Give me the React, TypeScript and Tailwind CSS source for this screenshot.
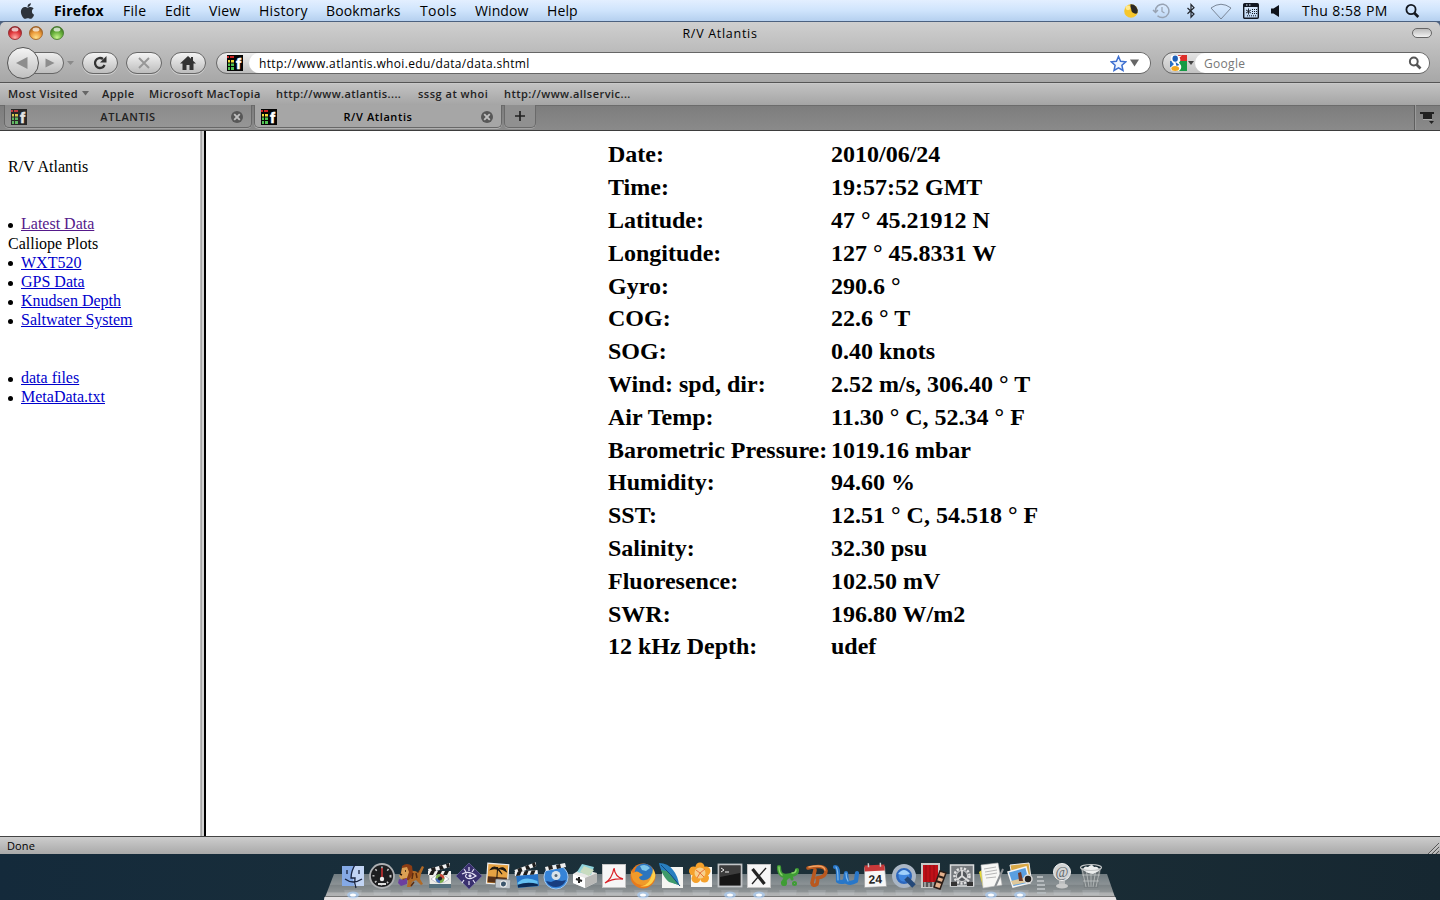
import React from "react";
import { FaApple } from "react-icons/fa";

type P = { children?: React.ReactNode };

const menus: [string, string][] = [
  ["Firefox", "w-[69px] font-bold tracking-[0.15px]"],
  ["File", "w-[42px] tracking-[0.3px]"],
  ["Edit", "w-[44px] tracking-[0.1px]"],
  ["View", "w-[50px] tracking-[0.2px]"],
  ["History", "w-[67px] tracking-[0.3px]"],
  ["Bookmarks", "w-[94px] tracking-[0.1px]"],
  ["Tools", "w-[55px] tracking-[0.4px]"],
  ["Window", "w-[72px] tracking-[0.1px]"],
  ["Help", "w-[60px] tracking-[0.1px]"],
];

const bookmarks: [string, string][] = [
  ["Apple", "w-[47px]"],
  ["Microsoft MacTopia", "w-[127px]"],
  ["http://www.atlantis....", "w-[142px]"],
  ["sssg at whoi", "w-[86px] tracking-[0.5px]"],
  ["http://www.allservic...", "w-[150px] tracking-[0.45px]"],
];

const readings: [string, string][] = [
  ["Date:", "2010/06/24"],
  ["Time:", "19:57:52 GMT"],
  ["Latitude:", "47 ° 45.21912 N"],
  ["Longitude:", "127 ° 45.8331 W"],
  ["Gyro:", "290.6 °"],
  ["COG:", "22.6 ° T"],
  ["SOG:", "0.40 knots"],
  ["Wind: spd, dir:", "2.52 m/s, 306.40 ° T"],
  ["Air Temp:", "11.30 ° C, 52.34 ° F"],
  ["Barometric Pressure:", "1019.16 mbar"],
  ["Humidity:", "94.60 %"],
  ["SST:", "12.51 ° C, 54.518 ° F"],
  ["Salinity:", "32.30 psu"],
  ["Fluoresence:", "102.50 mV"],
  ["SWR:", "196.80 W/m2"],
  ["12 kHz Depth:", "udef"],
];

function Favicon() {
  return (
    <svg width="16" height="16" viewBox="0 0 16 16" className="shrink-0 overflow-visible">
      <rect width="16" height="16" fill="#050505" />
      <path d="M0 1h2v2H0zM3 1h4v2H3z" fill="#c22" />
      <path d="M1 5h2v2.500H1zM4 5h3v2.500H4z" fill="#f0dc3c" />
      <path d="M1 8.500h2v2.500H1zM4 8.500h3v2.500H4zM1 12h2v3H1zM4 12h3v3H4z" fill="#4fc250" />
      <text x="9" y="14" fontFamily="Liberation Sans, sans-serif" fontWeight="700" fontSize="15" fill="#fff" stroke="#fff" strokeWidth=".6">f</text>
    </svg>
  );
}

function Light({ id, a, b, c }: { id: string; a: string; b: string; c: string }) {
  return (
    <svg width="14" height="14" viewBox="0 0 14 14">
      <defs>
        <radialGradient id={id} cx="50%" cy="85%" r="80%">
          <stop offset="0" stopColor={a} />
          <stop offset=".55" stopColor={b} />
          <stop offset="1" stopColor={c} />
        </radialGradient>
      </defs>
      <circle cx="7" cy="7" r="6.500" fill={`url(#${id})`} stroke={c} strokeWidth=".8" />
      <ellipse cx="7" cy="3.600" rx="3.400" ry="2" fill="#fff" opacity=".7" />
    </svg>
  );
}

function Pill({ children }: P) {
  return (
    <div className="flex h-[22px] w-9 items-center justify-center rounded-full border border-[#666] bg-linear-to-b from-[#f4f4f4] to-[#bdbdbd] shadow-[0_1px_0_#d0d0d0]">
      {children}
    </div>
  );
}

function CloseDot() {
  return (
    <svg width="12" height="12" viewBox="0 0 12 12">
      <circle cx="6" cy="6" r="6" fill="#575757" />
      <path d="M3.200 3.200l5.600 5.600M8.800 3.200l-5.600 5.600" stroke="#c0c0c0" strokeWidth="1.900" />
    </svg>
  );
}

function MenuBar() {
  return (
    <div className="flex h-[22px] items-center border-b border-[#4c617f] bg-linear-to-b from-[#e3efff] via-[#cfe4fc] to-[#b5d0ef] text-[14px] leading-[21px] text-black">
      <div className="flex w-[54px] justify-center">
        <FaApple className="h-[18px] w-[17px] text-[#2d333b]" />
      </div>
      {menus.map(([label, cls]) => (
        <span key={label} className={cls}>{label}</span>
      ))}
      <div className="ml-auto flex w-[318px] items-center">
        <svg width="18" height="18" viewBox="0 0 18 18">
          <circle cx="9" cy="9" r="6.800" fill="#f6c62b" />
          <path d="M8.500 2.200a6.800 6.800 0 0 1 7 8.500c-1 1.500-2.500 1-4 .300C8.500 9.500 10 7.500 8.500 5.500z" fill="#2b2926" />
          <circle cx="6" cy="5.800" r="2.400" fill="#ffe98f" />
        </svg>
        <svg className="ml-[12px]" width="18" height="18" viewBox="0 0 18 18" fill="none" stroke="#98a3b3" strokeWidth="1.500">
          <path d="M3.500 9.500a6.700 6.700 0 1 1 2 4.200M1 8l2.500 2.500L6 8" />
          <path d="M10 5v4.500l2.500 1.500" strokeWidth="1.200" />
        </svg>
        <svg className="ml-[14px]" width="14" height="16" viewBox="0 0 14 16" fill="none" stroke="#20242b" strokeWidth="1.200">
          <path d="M3.500 5l6.500 6-3 3.200V1.500l3 3.200-6.500 6.100" />
        </svg>
        <svg className="ml-[12px]" width="22" height="18" viewBox="0 0 22 18" fill="none" stroke="#7b8798" strokeWidth="1">
          <path d="M1 6Q11 -1.500 21 6L11 17z" />
        </svg>
        <svg className="ml-[11px]" width="16" height="16" viewBox="0 0 16 16">
          <rect x=".7" y=".7" width="14.600" height="14.600" rx="1" fill="none" stroke="#111722" strokeWidth="1.400" />
          <path d="M1 1h14v3H1z" fill="#111722" />
          <path d="M3 2h1.500M6 2h1.500" stroke="#dce9fa" />
          <path d="M5.500 5.500v6M3 7l5 3M8 7l-5 3" stroke="#111722" strokeWidth=".9" />
          <path d="M9 6.500h5M9 8.500h5M9 10.500h5M4 12.800h10" stroke="#111722" strokeDasharray="1 1" />
        </svg>
        <svg className="ml-[12px]" width="10" height="14" viewBox="0 0 10 14">
          <path d="M0 4.500h2.500L8 1v12L2.500 9.500H0z" fill="#0e121a" />
        </svg>
        <span className="ml-[21px] w-[101px] tracking-[0.45px]">Thu 8:58 PM</span>
        <svg width="18" height="18" viewBox="0 0 18 18" fill="none" stroke="#14181f">
          <circle cx="8" cy="7.500" r="4.600" strokeWidth="1.800" />
          <path d="M11.300 11l4 4" strokeWidth="2.600" />
        </svg>
      </div>
    </div>
  );
}

function TitleAndToolbar() {
  return (
    <div className="h-[61px] rounded-t-[5px] border-b border-[#555] bg-linear-to-b from-[#cfcfcf] to-[#a7a7a7]">
      <div className="flex h-[22px] items-center px-2">
        <div className="flex w-[100px] gap-[7px]">
          <Light id="lr" a="#ffb0a8" b="#e23a3e" c="#8e1f25" />
          <Light id="ly" a="#ffe08a" b="#eb9a3a" c="#9b5a1c" />
          <Light id="lg" a="#c9f58f" b="#68b03c" c="#3c7423" />
        </div>
        <div className="flex-1 pt-px text-center text-[12.5px] leading-[22px] tracking-[0.7px] text-black">R/V Atlantis</div>
        <div className="flex w-[100px] justify-end">
          <div className="h-[10px] w-[20px] rounded-full border border-[#666] bg-linear-to-b from-[#bbb] to-[#f2f2f2]" />
        </div>
      </div>
      <div className="flex h-[38px] items-center pl-[7px]">
        <div className="z-10 flex h-8 w-8 items-center justify-center rounded-full border border-[#555] bg-linear-to-b from-[#f4f4f4] to-[#c0c0c0]">
          <svg className="-mt-px mr-[2px]" width="12" height="12" viewBox="0 0 12 12"><path d="M11.500 0v12L0 6z" fill="#8d8d8d" /></svg>
        </div>
        <div className="-ml-[12px] flex h-[22px] w-[37px] items-center rounded-r-full border border-[#666] bg-linear-to-b from-[#ededed] to-[#bdbdbd] pl-[17px]">
          <svg width="10" height="10" viewBox="0 0 10 10"><path d="M.500 .500v9L9.500 5z" fill="#8d8d8d" /></svg>
        </div>
        <svg className="ml-[3px]" width="7" height="5" viewBox="0 0 7 5"><path d="M0 0h7L3.500 4z" fill="#8a8a8a" /></svg>
        <div className="ml-[8px] flex gap-2">
          <Pill>
            <svg width="16" height="16" viewBox="0 0 16 16">
              <path d="M12.600 10A5 5 0 1 1 11 4" fill="none" stroke="#333" strokeWidth="2.300" />
              <path d="M14.500 1v6.500H8z" fill="#333" />
            </svg>
          </Pill>
          <Pill>
            <svg width="14" height="14" viewBox="0 0 14 14"><path d="M2 2l10 10M12 2L2 12" stroke="#979797" strokeWidth="1.900" /></svg>
          </Pill>
          <Pill>
            <svg width="16" height="14" viewBox="0 0 16 14"><path d="M8 0l3 2.800V1h2v3.700L16 7.500H13.500V14H9.500V9h-3v5h-4V7.500H0z" fill="#333" /></svg>
          </Pill>
        </div>
        <div className="ml-[10px] flex h-[22px] w-[935px] items-center rounded-full border border-[#666] bg-linear-to-b from-[#f0f0f0] to-[#bcbcbc] pl-[10px]">
          <Favicon />
          <div className="ml-[6px] flex h-5 flex-1 items-center rounded-full bg-white pl-[10px] text-[12px] leading-5 text-black">
            <span className="pt-px tracking-[0.35px]">http://www.atlantis.whoi.edu/data/data.shtml</span>
            <svg className="ml-auto" width="17" height="17" viewBox="0 0 17 17">
              <path d="M8.500 1.500l2.100 4.800 5.200.5-3.900 3.500 1.100 5.200-4.500-2.700L4 15.500l1.100-5.200L1.200 6.800l5.200-.5z" fill="#eef5ff" stroke="#3d6fd0" strokeWidth="1.500" />
            </svg>
            <svg className="mr-[11px] ml-[3px]" width="9" height="8" viewBox="0 0 9 8"><path d="M0 .500h9L4.500 7.500z" fill="#666" /></svg>
          </div>
        </div>
        <div className="ml-[11px] flex h-[22px] w-[268px] items-center rounded-full border border-[#666] bg-linear-to-b from-[#e4e4e4] to-[#c2c2c2] pl-[7px]">
          <svg width="17" height="17" viewBox="0 0 17 17">
            <path d="M8 0h9v6H8z" fill="#dd2e2a" />
            <path d="M8 6h9v10H8z" fill="#179a45" />
            <path d="M0 6h5v6H0z" fill="#2a6fc4" />
            <path d="M1 1q4-2 8 0l3-.5-2.500 2q2 3-.5 5l2 3q1 4-2 5.500H2q-3-3 0-5l2-2Q0 6 1 1z" fill="#fff" />
            <ellipse cx="5.200" cy="3.600" rx="2.700" ry="3.200" fill="#1d5fb8" />
            <path d="M5.500 7l4 3-3 1z" fill="#1d5fb8" />
            <ellipse cx="5.200" cy="13.500" rx="3.900" ry="2.500" fill="#f2a821" />
          </svg>
          <svg className="ml-[1px]" width="6" height="4" viewBox="0 0 6 4"><path d="M0 0h6L3 4z" fill="#444" /></svg>
          <div className="ml-px flex h-5 flex-1 items-center rounded-full bg-white pl-[9px] text-[12px] leading-5 text-[#777]">
            <span className="pt-px tracking-[0.3px]">Google</span>
            <svg className="mr-[7px] ml-auto" width="14" height="14" viewBox="0 0 14 14" fill="none" stroke="#555">
              <circle cx="5.800" cy="5.500" r="3.900" strokeWidth="2" />
              <path d="M8.500 8.500l4 4" strokeWidth="2.600" />
            </svg>
          </div>
        </div>
      </div>
    </div>
  );
}

function BookmarkBar() {
  return (
    <div className="flex h-[22px] items-center border-t border-[#c9c9c9] bg-linear-to-b from-[#c2c2c2] to-[#a5a5a5] pb-[2px] pl-2 text-[11px] leading-[19px] font-semibold tracking-[0.4px] whitespace-nowrap text-[#222]">
      <span className="w-[74px]">Most Visited</span>
      <svg className="mr-[13px]" width="7" height="5" viewBox="0 0 7 5"><path d="M0 0h7L3.500 4.500z" fill="#666" /></svg>
      {bookmarks.map(([label, cls]) => (
        <span key={label} className={cls}>{label}</span>
      ))}
    </div>
  );
}

function TabBar() {
  return (
    <div className="flex h-[26px] items-start border-b border-[#3d3d3d] bg-linear-to-b from-[#7d7d7d] to-[#8a8a8a] pl-[4px] text-[11px] leading-[22px] font-semibold text-[#222] shadow-[inset_0_1px_0_#6c6c6c]">
      <div className="flex h-[23px] w-[248px] items-center rounded-b-[5px] border border-t-0 border-[#686868] bg-linear-to-b from-[#8b8b8b] to-[#969696] pt-px pr-2 pl-[6px] shadow-[0_1px_0_#a2a2a2]">
        <span className="flex opacity-75"><Favicon /></span>
        <span className="flex-1 pr-[2px] text-center tracking-[0.55px]">ATLANTIS</span>
        <CloseDot />
      </div>
      <div className="ml-[2px] flex h-[23px] w-[248px] items-center rounded-b-[5px] border border-t-0 border-[#686868] bg-[#a6a6a6] pt-px pr-2 pl-[6px] text-black shadow-[0_1px_0_#b0b0b0]">
        <Favicon />
        <span className="flex-1 pr-[2px] text-center tracking-[0.6px]">R/V Atlantis</span>
        <CloseDot />
      </div>
      <div className="ml-[2px] flex h-[23px] w-[32px] items-center justify-center rounded-b-[5px] border border-t-0 border-[#6a6a6a] bg-[#909090] shadow-[0_1px_0_#a2a2a2]">
        <svg width="12" height="12" viewBox="0 0 12 12"><path d="M6 1v10M1 6h10" stroke="#222" strokeWidth="1.700" /></svg>
      </div>
      <div className="ml-auto flex h-[25px] w-[26px] items-center border-l border-[#5f5f5f] pl-[5px] shadow-[inset_1px_0_0_#9b9b9b]">
        <svg width="15" height="14" viewBox="0 0 15 14">
          <path d="M0 1h14v2h-2v5H3V3H0z" fill="#222" />
          <path d="M9 10h5l-2.500 3z" fill="#222" />
          <path d="M3 8.500h9" stroke="#aaa" />
        </svg>
      </div>
    </div>
  );
}

function Bullet({ children, visited }: P & { visited?: boolean }) {
  return (
    <li className="flex items-center">
      <span className="mt-[3px] mr-[8px] h-[5px] w-[5px] rounded-full bg-black" />
      <a className={visited ? "text-[#551a8b] underline" : "text-[#0000cc] underline"}>{children}</a>
    </li>
  );
}

function Sidebar() {
  return (
    <div className="w-[200px] pt-[26px] pl-2 font-['Liberation_Serif',serif] text-[16px] leading-[19.2px] text-black">
      <p>R/V Atlantis</p>
      <ul className="mt-[38.2px]">
        <Bullet visited>Latest Data</Bullet>
        <li>Calliope Plots</li>
        <Bullet>WXT520</Bullet>
        <Bullet>GPS Data</Bullet>
        <Bullet>Knudsen Depth</Bullet>
        <Bullet>Saltwater System</Bullet>
      </ul>
      <ul className="mt-[38.4px]">
        <Bullet>data files</Bullet>
        <Bullet>MetaData.txt</Bullet>
      </ul>
    </div>
  );
}

function Paper() {
  return <rect x="2.500" y="2.500" width="23" height="23" fill="#f6f6f6" stroke="#c4c4c4" />;
}

function Clapper({ body }: { body: string }) {
  return (
    <g>
      <path d="M3 10h22v15H4z" fill={body} />
      <path d="M2 9h23v4H2zM2 7L24 1v4L3 11z" fill="#f2f2f2" />
      <path d="M5 9h4l-2 4H3zM12 9h4l-2 4h-4zM19 9h4l-2 4h-4zM5 6l4-1 1 4-4 1zM13 4l3-1 2 4-4 1zM20 2l3-1 1 4-3 1z" fill="#1c1c1c" />
    </g>
  );
}

const dockIcons: { name: string; on?: boolean; art: React.ReactNode }[] = [
  { name: "finder", on: true, art: <g>
    <path d="M3 4h22v20H3z" fill="#84a9e6" /><path d="M16 4h9v20H15l-1-8h-2q1-8 4-12z" fill="#c1d4f4" />
    <path d="M17 1q-5 8-5 15h4q-1 5 1 10M8 8v4M20 8v4M6 17q8 6 17 0" fill="none" stroke="#18233f" strokeWidth="1.300" /></g> },
  { name: "dashboard", art: <g>
    <circle cx="14" cy="14" r="12" fill="#1d1e20" stroke="#aeb0b3" strokeWidth="1.800" />
    <circle cx="14" cy="14" r="8.500" fill="none" stroke="#c7c7c7" strokeWidth="2" strokeDasharray="1.500 5" />
    <path d="M14 17V6" stroke="#e33" strokeWidth="1.300" /><circle cx="14" cy="17" r="2.200" fill="#eee" /><path d="M10 22h8" stroke="#ddd" strokeWidth="2" /></g> },
  { name: "lion", art: <g>
    <path d="M12 9q7-1 9 2l4-7 2 1-3 7-1 5 3 5-2 1-5-5-4 2-1 5h-4l1-7z" fill="#b06a26" />
    <path d="M5 4q5-4 10 0l1 8-4 6-6 1-2-6z" fill="#8c3d14" /><path d="M5 6l5-1 2 5-2 6-6 1-2-3 2-3z" fill="#dca054" />
    <path d="M2 17l4 1 4-2v6l-6 2-3-3z" fill="#6b3fa0" /><path d="M16 11l-1 6M19 11l1 5M22 10l-1-1M17 20l-3 4" stroke="#5c2c10" strokeWidth="1.500" /><path d="M3 12l2 1M8 9h1" stroke="#2b1406" strokeWidth="1.500" /></g> },
  { name: "media", art: <g><Clapper body="#ecece8" />
    <path d="M5 17q9-9 18 0-9 8-18 0z" fill="#fff" stroke="#99a" strokeWidth=".6" />
    <circle cx="14" cy="16.500" r="4.500" fill="#7bb04f" /><path d="M14 12a4.500 4.500 0 0 1 4.500 4.500H14z" fill="#d2493d" /><path d="M9.500 16.500A4.500 4.500 0 0 0 14 21v-4.500z" fill="#4269bd" /><circle cx="14" cy="16.500" r="2.100" fill="#222" />
    <path d="M3 22h22v4H3z" fill="#54707d" /></g> },
  { name: "eye", art: <g>
    <path d="M14 1l13 13-13 13L1 14z" fill="#39306e" stroke="#6c65a0" strokeWidth=".7" />
    <path d="M7 12q7-4 14 2-6 4-9 2-3-2 0-4M14 5v4M9 7l2 3M19 7l-2 3M14 19v4M9 18l-2 3M18 18l2 3" fill="none" stroke="#e4e1f4" strokeWidth="1.200" /><circle cx="15" cy="13.800" r="1.600" fill="#e4e1f4" /></g> },
  { name: "iphoto", art: <g transform="rotate(4 14 14)">
    <path d="M3 2h21v20H3z" fill="#e7a343" stroke="#eee" strokeWidth="1.200" /><path d="M4 15h19v6H4z" fill="#553018" />
    <path d="M13 5v16M14 7q-5-4-8 1 5-2 8 0zM14 7q6-4 8 2-5-3-8-2zM14 7l4 5-3-3z" fill="#191510" stroke="#191510" />
    <rect x="12" y="17" width="15" height="9" rx="1" fill="#c0c6cc" stroke="#70767b" strokeWidth=".6" /><circle cx="20" cy="21.500" r="3" fill="#3c556c" stroke="#eee" /></g> },
  { name: "imovie", art: <g><g transform="rotate(-5 14 14)"><Clapper body="#2674c9" /><path d="M4 20q8-7 20 0v5H4z" fill="#64c1f2" /><path d="M4 22q10-3 20 1v2H4z" fill="#0c2b57" /></g></g> },
  { name: "idvd", art: <g>
    <circle cx="14" cy="15" r="12" fill="#3684d8" stroke="#a3c8ee" /><path d="M4 19l5 1 5-2 6 1 4-1q-3 7-10 7T4 19z" fill="#173d80" />
    <circle cx="14" cy="13.500" r="4.500" fill="#d9e2e9" /><circle cx="14" cy="13.500" r="1.500" fill="#567" />
    <path d="M3 5l20-4 1 4-20 4z" fill="#eee" /><path d="M6 4l4-1 1 4-4 1zM14 3l4-1 1 4-4 1z" fill="#222" /></g> },
  { name: "cube", art: <g>
    <path d="M2 12l8-5 16 4v9l-12 6-12-5z" fill="#e9e9e7" /><path d="M2 12l12 4v10L2 21z" fill="#fff" /><path d="M14 16l12-5v9l-12 6z" fill="#b9b9b7" />
    <path d="M6 10l5-8 12 3-3 8z" fill="#8ed3dc" /><path d="M9 10l4-6 10 4-5 6z" fill="#c9dcc0" /><path d="M8 15v6M5 17l6 2" stroke="#222" strokeWidth="2" /></g> },
  { name: "acrobat", art: <g><Paper />
    <path d="M5 21q7-4 9-15 1 9 9 11-10-1-18 4z" fill="none" stroke="#da2027" strokeWidth="1.300" /></g> },
  { name: "firefox", on: true, art: <g>
    <circle cx="14" cy="14" r="12.500" fill="#e77a1d" /><circle cx="15" cy="11" r="9.500" fill="#2d75bd" /><path d="M11 4q6-3 10 2l-4 3-4-1z" fill="#7ec6ea" />
    <path d="M2 6q0 4 2 5 4-3 7 0l3 2-4 2q1 4 6 3 5 0 7-7 1 8-5 11-9 3-14-4-3-6-2-12z" fill="#f09a2a" /><path d="M24 7q5 8-1 14-5 5-12 3 11 0 13-17z" fill="#ffd04a" /></g> },
  { name: "feather", art: <g><rect x="4" y="5" width="21" height="21" fill="#f5f5f2" />
    <path d="M1 1q9 0 14 7 5 6 6 15-9-2-14-9Q2 8 1 1z" fill="#287fc0" /><path d="M3 8q3 8 8 12l10 3L9 9z" fill="#3e9a6a" /><path d="M3 3q10 9 19 21" fill="none" stroke="#124a7d" /></g> },
  { name: "flower", art: <g><rect x="4" y="5" width="21" height="20" fill="#f7f7f4" />
    <g fill="#f5a12b"><circle cx="13" cy="5" r="4.500" /><circle cx="19" cy="9" r="4.500" /><circle cx="17.500" cy="16" r="4.500" /><circle cx="9" cy="16.500" r="4.500" /><circle cx="6.500" cy="9" r="4.500" /></g>
    <circle cx="13" cy="11" r="5.500" fill="#f7d08c" /><path d="M13 11l5-4M13 11l-3 5M13 11l-4-3M13 11l4 4" stroke="#e8703a" strokeWidth="1" /></g> },
  { name: "terminal", on: true, art: <g><rect x="2.500" y="2.500" width="23" height="22" fill="#161616" stroke="#c2c5c7" strokeWidth="1.800" /><path d="M4 4h20v7L4 15z" fill="#3c3c3c" /><path d="M5 6l3 2-3 2M9 10h4" fill="none" stroke="#eee" /></g> },
  { name: "x11", on: true, art: <g><Paper /><path d="M7.500 7l12 15" stroke="#222" strokeWidth="3.200" /><path d="M21 6L7 22" stroke="#222" strokeWidth="1.300" /></g> },
  { name: "excel", art: <g fill="none" stroke="#3f9d35" strokeWidth="4.200" strokeLinecap="round"><path d="M5 5q0 6 3 8 3 1.500 9 0 6-1 6-5M16 14q-5 1-6 6" /><path d="M17 14l1 3" strokeWidth="3" /><circle cx="10" cy="21" r="1" /><circle cx="20.500" cy="21.500" r="1" strokeWidth="3" /><path d="M5 5q0 6 3 8M22 8q0 3-4 3" stroke="#8cd56e" strokeWidth="1.400" /></g> },
  { name: "powerpoint", art: <g fill="none" stroke="#b9581e" strokeWidth="3.600" strokeLinecap="round" strokeLinejoin="round"><path d="M5 6q17-4 18 3 0 6-9 7M12 8l-3 13q1 4 5 1l1-6" /><path d="M6 5q15-3 16 3" stroke="#f0a566" strokeWidth="1.300" /></g> },
  { name: "word", art: <g fill="none" stroke="#2877c9" strokeWidth="4.200" strokeLinecap="round" strokeLinejoin="round"><path d="M3 5q3 0 3 6v8q3 2 7 0l1-8M14 11l1 9q4 2 9-1l1-8" /><path d="M4 5q2 3 2 13M14 11q0 5 2 8" stroke="#80bbee" strokeWidth="1.200" /></g> },
  { name: "ical", art: <g transform="rotate(-3 14 14)"><path d="M4 5h20l1 20H3z" fill="#f7f7f7" stroke="#999" strokeWidth=".6" /><path d="M4 3h20v6H4z" fill="#c8393a" /><path d="M8 1v4M20 1v4" stroke="#ccc" strokeWidth="1.500" />
    <text x="14" y="21.500" textAnchor="middle" fontFamily="Liberation Sans, sans-serif" fontWeight="700" fontSize="12" fill="#222">24</text></g> },
  { name: "quicktime", art: <g><circle cx="14" cy="14" r="10" fill="#2c67be" stroke="#aab6c5" strokeWidth="4" /><circle cx="14" cy="14" r="5.500" fill="#3f86de" /><path d="M8 12q6-8 12 0-6 2-12 0z" fill="#9fd0fa" /><path d="M16 16l8 8" stroke="#244979" strokeWidth="5" /></g> },
  { name: "photobooth", art: <g><path d="M2 1h19v25H2z" fill="#c9c9c7" /><path d="M4 3h15v17H4z" fill="#bf1018" /><path d="M7 3v17M11 3v17M15 3v17" stroke="#a00c13" strokeWidth="1.200" /><path d="M4 20h15v5H4z" fill="#555" /><path d="M6 20v5M10 21v4M14 20v5" stroke="#ddd" /><path d="M21 9l6 2-6 16-6-2z" fill="#e3b08c" stroke="#2b1d18" strokeWidth="1.500" /><path d="M19 14l6 2M17 19l6 2" stroke="#2b1d18" strokeWidth="2" /></g> },
  { name: "preferences", art: <g><rect x="2.500" y="3" width="23" height="21" fill="#777b7f" stroke="#dadcdd" strokeWidth="1.500" /><circle cx="14" cy="14" r="7.500" fill="none" stroke="#e2e2e2" strokeWidth="2.500" strokeDasharray="2.200 1.500" /><circle cx="14" cy="14" r="5.500" fill="#54585c" stroke="#ddd" /><path d="M14 14V8M14 14l-5 4M14 14l5 4" stroke="#ddd" strokeWidth="1.800" /><path d="M3 20h6v4H3zM19 20h6v4h-6z" fill="#333" /></g> },
  { name: "textedit", on: true, art: <g><path d="M2 10l4-3v18z" fill="#e6d832" /><path d="M4 3l17-2 4 22-19 3z" fill="#f7f7f5" stroke="#bbb" strokeWidth=".6" /><path d="M7 7l12-2M8 10l12-2M8 13l12-2M9 16l10-1" stroke="#a5a5a5" strokeWidth=".8" /><path d="M26 7L18 25" stroke="#8c9094" strokeWidth="2" /></g> },
  { name: "preview", on: true, art: <g><path d="M4 3l19-2 2 15-18 3z" fill="#d9a948" stroke="#eee" /><path d="M2 10l18-5 4 16-17 4z" fill="#5b9fe0" stroke="#f5f5f5" strokeWidth="1.500" /><path d="M5 19l16-4 1 5-15 3z" fill="#dfc89a" /><path d="M12 11l3-1 2 9h-4z" fill="#70392a" /><circle cx="22" cy="17" r="4" fill="#222" stroke="#ddd" strokeWidth="1.500" /></g> },
];

const springArt = (
  <g><path d="M14 16v7" stroke="#a4a8aa" strokeWidth="6" /><path d="M11 20h6M11 22h6" stroke="#ddd" strokeWidth=".8" /><ellipse cx="14" cy="24" rx="6" ry="2.500" fill="#c9caca" /><circle cx="14" cy="10" r="8.500" fill="#d2d4d5" stroke="#eee" />
    <text x="14" y="14.500" textAnchor="middle" fontFamily="Liberation Serif, serif" fontSize="14" fill="#62686b">@</text></g>
);
const trashArt = (
  <g><path d="M4 6h20l-3 20H7z" fill="#777d80" opacity=".8" /><path d="M5 7l4 18M9 7l3 18M14 7v18M19 7l-3 18M23 7l-4 18M5 13h18M6 19h16" stroke="#c6caca" strokeWidth=".7" /><path d="M6 8q1-5 5-3 4-4 6 0 5-1 5 4l-6 3-5-1z" fill="#eceeee" /><ellipse cx="14" cy="5.500" rx="10.500" ry="3" fill="none" stroke="#c4c7c8" strokeWidth="1.200" /></g>
);

function DockItem({ on, children }: P & { on?: boolean }) {
  return (
    <div className="flex w-[29px] shrink-0 flex-col items-center">
      <svg width="28" height="28" viewBox="0 0 28 28">{children}</svg>
      <svg width="26" height="12" viewBox="0 1 26 12">
        <path d="M4 0h18l-1 6H5z" fill="#d8dfe4" opacity=".18" />
        {on && <ellipse cx="13" cy="6" rx="6" ry="3.500" fill="#a8d0ff" opacity=".6" />}
        {on && <ellipse cx="13" cy="6" rx="3" ry="1.600" fill="#fff" />}
      </svg>
    </div>
  );
}

function Dock() {
  return (
    <div className="relative h-[46px] overflow-hidden bg-linear-to-r from-[#142a3b] via-[#1d3139] to-[#162731]">
      <svg className="absolute bottom-0 left-[323px]" width="794" height="26" viewBox="0 0 794 26">
        <defs>
          <linearGradient id="shelf" x1="0" y1="0" x2="0" y2="1">
            <stop offset="0" stopColor="#707b80" />
            <stop offset=".4" stopColor="#8b9295" />
            <stop offset=".42" stopColor="#7b8285" />
            <stop offset=".7" stopColor="#909597" />
            <stop offset=".72" stopColor="#adafb0" />
            <stop offset="1" stopColor="#b9b9ba" />
          </linearGradient>
        </defs>
        <path d="M11 0h773l9 26H1z" fill="url(#shelf)" />
        <path d="M2 22.500h790" stroke="#777" />
        <path d="M1.500 23h791l1 3H1z" fill="#e6e3e4" />
        <path d="M714 3h6M714 7h7M714 11h8M714 15h8M714 19h9" stroke="#b5babd" strokeWidth="2" />
      </svg>
      <div className="relative flex pt-[8px] pl-[338px]">
        {dockIcons.map((d) => (
          <DockItem key={d.name} on={d.on}>{d.art}</DockItem>
        ))}
        <div className="w-[13px]" />
        <DockItem>{springArt}</DockItem>
        <DockItem>{trashArt}</DockItem>
      </div>
    </div>
  );
}

export default function App() {
  return (
    <div className="flex h-[900px] w-[1440px] flex-col overflow-hidden bg-[#4c617f] font-['Open_Sans','Noto_Sans',sans-serif]">
      <MenuBar />
      <TitleAndToolbar />
      <BookmarkBar />
      <TabBar />
      <div className="flex h-[705px] bg-white">
        <Sidebar />
        <div className="w-[6px] border-r-2 border-l border-r-black border-l-[#bcbcbc] bg-[#d2d2d2] shadow-[inset_1px_0_0_#a8a8a8]" />
        <div className="flex-1 pt-[7.4px] pl-[402px] font-['Liberation_Serif',serif] text-[24px] leading-[32.8px] font-bold text-black">
          {readings.map(([label, value]) => (
            <div key={label} className="flex whitespace-nowrap">
              <span className="w-[223px]">{label}</span>
              <span>{value}</span>
            </div>
          ))}
        </div>
      </div>
      <div className="flex h-[18px] items-center justify-between border-t border-[#444] bg-linear-to-b from-[#cdcdcd] to-[#a9a9a9] pl-[7px] text-[11px] leading-[17px] text-black">
        <span className="tracking-[0.1px]">Done</span>
        <svg className="self-end" width="12" height="12" viewBox="0 0 12 12"><path d="M0 12L11 1M4 12l7-7M8 12l3-3" stroke="#555" /><path d="M1.500 12L12 1.500M5.500 12L12 5.500" stroke="#ddd" strokeWidth=".7" /></svg>
      </div>
      <Dock />
    </div>
  );
}
